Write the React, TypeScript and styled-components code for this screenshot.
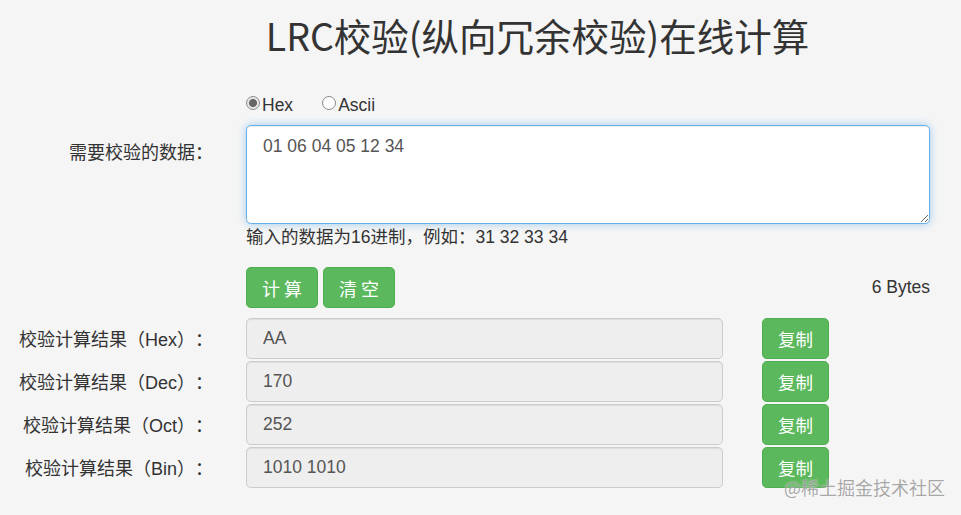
import React from "react";
import styled, { createGlobalStyle } from "styled-components";

const GlobalStyle = createGlobalStyle`
    html, body {
        margin: 0;
        padding: 0;
        background: #f5f5f5;
    }
    body {
        font-family: "Liberation Sans", "Noto Sans CJK SC", sans-serif;
        font-size: 17.5px;
        color: #333;
        text-spacing-trim: space-all;
    }
`;

const Page = styled.div`
    position: relative;
    width: 961px;
    height: 515px;
    overflow: hidden;
`;

const Title = styled.h1`
    margin: 15px 0 0 0;
    padding-left: 114px;
    text-align: center;
    font-family: "Noto Sans CJK SC", sans-serif;
    font-weight: 400;
    font-size: 37.5px;
    line-height: 40px;
    color: #333;
`;

const Form = styled.div`
    display: grid;
    grid-template-columns: 213px 684px;
    column-gap: 33px;
    margin-top: 37px;
`;

const Label = styled.div<{ $top?: number }>`
    text-align: right;
    align-self: ${(p) => (p.$top !== undefined ? "start" : "center")};
    padding-top: ${(p) => p.$top ?? 0}px;
    font-size: 18px;
    line-height: 24px;
    color: #333;
    white-space: nowrap;
    text-spacing-trim: space-all;
`;

const Empty = styled.div``;

const RadioRow = styled.div`
    display: flex;
    align-items: center;
    height: 24px;
    gap: 29px;
    margin-top: 1px;
`;

const RadioLabel = styled.label`
    display: flex;
    align-items: center;
    color: #333;
`;

const Radio = styled.input`
    appearance: none;
    margin: 0 2px 0 0;
    width: 14px;
    height: 14px;
    border: 1px solid #8a8a8a;
    border-radius: 50%;
    background: #fff;
    position: relative;
    top: -2px;
    &:checked {
        background: radial-gradient(circle, #666 0 3.6px, #e6e6e6 4.4px);
    }
`;

const FieldStack = styled.div`
    display: flex;
    flex-direction: column;
    margin-top: 8px;
`;

const TextArea = styled.textarea`
    box-sizing: border-box;
    width: 684px;
    height: 99px;
    padding: 8px 16px;
    font-family: "Liberation Sans", "Noto Sans CJK SC", sans-serif;
    font-size: 17.5px;
    line-height: 24px;
    color: #555;
    background: #fff;
    border: 1px solid #66afe9;
    border-radius: 4.8px;
    outline: none;
    box-shadow: inset 0 1px 1px rgba(0, 0, 0, 0.075), 0 0 8px rgba(102, 175, 233, 0.6);
    resize: vertical;
`;

const Help = styled.div`
    margin-top: 1px;
    line-height: 24px;
    color: #333;
`;

const ActionRow = styled.div`
    display: flex;
    align-items: center;
    margin-top: 18px;
    margin-bottom: 10px;
`;

const Button = styled.button<{ $spaced?: boolean }>`
    height: 41px;
    padding: ${(p) => (p.$spaced ? "0 11px 0 15px" : "0 15px")};
    margin-right: 5px;
    border: 1px solid #4cae4c;
    border-radius: 4.8px;
    background: #5cb85c;
    color: #fff;
    font-family: "Noto Sans CJK SC", sans-serif;
    font-size: ${(p) => (p.$spaced ? 18 : 17.5)}px;
    letter-spacing: ${(p) => (p.$spaced ? 4 : 0)}px;
    line-height: 1;
    cursor: pointer;
`;

const Bytes = styled.div`
    margin-left: auto;
    color: #333;
`;

const ResultRow = styled.div`
    display: flex;
    align-items: center;
    gap: 39px;
    margin-bottom: 2px;
`;

const Output = styled.input`
    box-sizing: border-box;
    width: 477px;
    height: 41px;
    padding: 0 16px;
    font-family: "Liberation Sans", "Noto Sans CJK SC", sans-serif;
    font-size: 17.5px;
    color: #555;
    background: #eee;
    border: 1px solid #ccc;
    border-radius: 4.8px;
    box-shadow: inset 0 1px 1px rgba(0, 0, 0, 0.075);
    outline: none;
`;

const Watermark = styled.div`
    position: absolute;
    right: 16px;
    bottom: 17px;
    font-family: "Noto Sans CJK SC", sans-serif;
    font-size: 18px;
    line-height: 22px;
    color: rgba(140, 140, 140, 0.75);
    text-shadow: 0 0 2px rgba(255, 255, 255, 0.8);
    pointer-events: none;
`;

const results = [
    { name: "Hex", value: "AA" },
    { name: "Dec", value: "170" },
    { name: "Oct", value: "252" },
    { name: "Bin", value: "1010 1010" },
];

export default function App() {
    return (
        <Page>
            <GlobalStyle />
            <Title>LRC校验(纵向冗余校验)在线计算</Title>
            <Form>
                <Empty />
                <RadioRow>
                    <RadioLabel>
                        <Radio type="radio" name="mode" defaultChecked />
                        Hex
                    </RadioLabel>
                    <RadioLabel>
                        <Radio type="radio" name="mode" />
                        Ascii
                    </RadioLabel>
                </RadioRow>

                <Label $top={24}>需要校验的数据：</Label>
                <FieldStack>
                    <TextArea defaultValue="01 06 04 05 12 34" />
                    <Help>输入的数据为16进制，例如：31 32 33 34</Help>
                </FieldStack>

                <Empty />
                <ActionRow>
                    <Button $spaced>计算</Button>
                    <Button $spaced>清空</Button>
                    <Bytes>6 Bytes</Bytes>
                </ActionRow>

                {results.map((r) => (
                    <React.Fragment key={r.name}>
                        <Label>校验计算结果（{r.name}）：</Label>
                        <ResultRow>
                            <Output readOnly value={r.value} />
                            <Button>复制</Button>
                        </ResultRow>
                    </React.Fragment>
                ))}
            </Form>
            <Watermark>@稀土掘金技术社区</Watermark>
        </Page>
    );
}
